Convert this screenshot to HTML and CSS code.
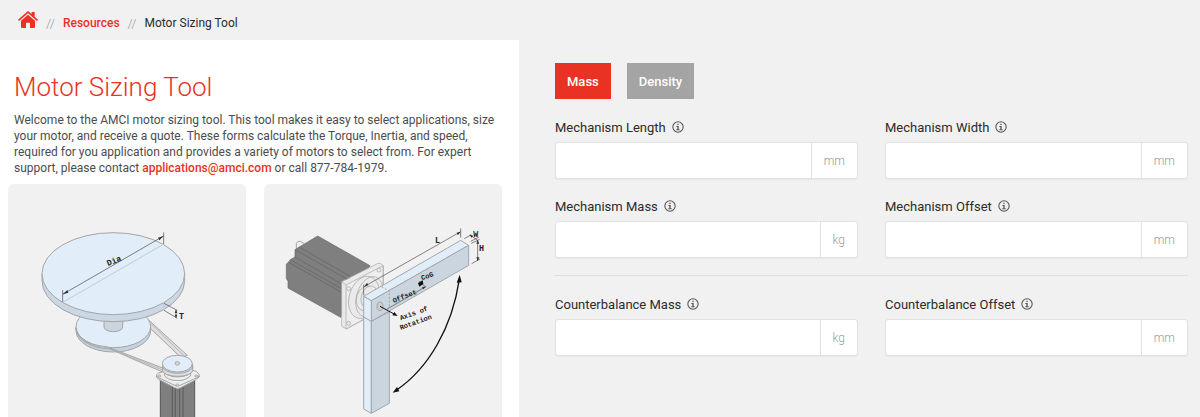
FILE: index.html
```html
<!DOCTYPE html>
<html lang="en">
<head>
<meta charset="utf-8">
<meta name="viewport" content="width=device-width, initial-scale=1">
<title>Motor Sizing Tool</title>
<link rel="stylesheet" href="styles.css">
</head>
<body>
<nav class="breadcrumb" aria-label="Breadcrumb">
  <a class="home" href="#" aria-label="Home">
    <svg viewBox="0 0 60 51" aria-hidden="true"><path d="M30 11 51 29V48Q51 51 48 51H36V35H24V51H12Q9 51 9 48V29Z"/><path d="M30 0 41 9V3H50V17L60 26 57 30 30 7 3 30 0 26Z"/></svg>
  </a>
  <span class="sep">//</span>
  <a class="crumb" href="#">Resources</a>
  <span class="sep">//</span>
  <span>Motor Sizing Tool</span>
</nav>
<main class="layout">
  <section class="intro">
    <h1>Motor Sizing Tool</h1>
    <p>Welcome to the AMCI motor sizing tool. This tool makes it easy to select applications, size your motor, and receive a quote. These forms calculate the Torque, Inertia, and speed, required for you application and provides a variety of motors to select from. For expert support, please contact <a href="#">applications@amci.com</a> or call 877-784-1979.</p>
    <div class="cards">
      <a class="card" href="#" aria-label="Rotary table">
        <svg viewBox="24 12 714 699" class="diagram">
          <g stroke="#a3a5a8" stroke-width="3">
            <path d="M448 422 562 526 542 532 446 440Z" fill="#dedede"/>
            <path d="M453 431 553 528" fill="none" stroke-width="2"/>
            <path d="M228 440V452A112 64 0 0 0 452 452V440Z" fill="#c5d3df"/>
            <ellipse cx="340" cy="440" rx="112" ry="63" fill="#e1edf8"/>
            <path d="M228 444C229 480 276 505 330 507L488 576V564L320 500C270 496 233 478 228 444Z" fill="#dedede"/>
            <path d="M229 450C237 485 280 501 324 503L488 570" fill="none" stroke-width="2"/>
            <path d="M312 418V441A28 14 0 0 0 368 441V418Z" fill="#cbd5df"/>
            <path d="M126 281V302A214 123 0 0 0 554 302V281Z" fill="#cbd7e2"/>
            <ellipse cx="340" cy="281" rx="214" ry="123" fill="#e1edf8"/>
          </g>
          <path d="M190 366 490 193M492 370V391" stroke="#bfcada" stroke-width="3"/>
          <g fill="none" stroke="#454545" stroke-width="2">
            <path d="M188 330V366M491 157V192M188 343 491 168M492 370 532 391M492 391 532 415M528 390V413"/>
          </g>
          <path d="M188 343 202 330 205 338ZM491 168 478 181 474 173ZM528 389 524 399H532ZM528 414 524 404H532Z" fill="#333"/>
          <text class="dim large" x="324" y="258" transform="rotate(-22 324 258)">Dia</text>
          <text class="dim large" x="537" y="418">T</text>
          <path d="M480 598H585V711H480Z" fill="#7f7f7f"/>
          <path d="M481 600V711M517 618V711M526 620V711M539 620V711M549 616V711M584 600V711" stroke="#5c5c5c" stroke-width="3"/>
          <g stroke="#a3a5a8" stroke-width="3" fill="#eee">
            <path d="M470 592Q466 583 476 579L490 575 528 562Q534 560 540 562L588 574Q600 580 598 591L586 600 540 624Q532 628 524 623L476 598Z"/>
            <path d="M468 588Q472 591 478 594L526 617Q532 620 538 617L589 594 598 588" fill="none"/>
            <ellipse cx="478" cy="588" rx="5" ry="3"/><ellipse cx="589" cy="588" rx="5" ry="3"/><ellipse cx="532" cy="615" rx="5" ry="3"/>
            <path d="M493 572V585A40 20 0 0 0 572 585V572Z"/>
            <path d="M488 552V566A45 25 0 0 0 578 566V552Z" fill="#c9d5df"/>
            <path d="M488 558V571A45 18 0 0 0 578 571V558A45 22 0 0 1 488 558Z" fill="#dedede"/>
            <ellipse cx="532" cy="551" rx="45" ry="25" fill="#e1edf8"/>
            <ellipse cx="532" cy="550" rx="7" ry="5" fill="#ddd"/>
          </g>
        </svg>
      </a>
      <a class="card" href="#" aria-label="Rotating arm">
        <svg viewBox="12 12 714 699" class="diagram">
          <g stroke="#a3a5a8" stroke-width="3" fill="#eee">
            <path d="M109 206V190Q112 182 122 184L134 192 130 206Z"/>
          </g>
          <path d="M173 168 330 257 242 412 84 324V303L79 296V252L87 245 91 239 105 231V209Z" fill="#7f7f7f" stroke="#666" stroke-width="2"/>
          <path d="M105 209 270 302M105 231 250 315M91 239 245 326M86 247 243 336M118 201 270 289" fill="none" stroke="#606060" stroke-width="2"/>
          <g stroke="#a3a5a8" stroke-width="2" fill="#eaeaea">
            <path d="M245 305 354 250Q360 247 370 257V386L260 447 245 439Z"/>
            <path d="M258 315 369 257V386L258 447Z" fill="#eee"/>
            <path d="M245 305 258 315M258 299 270 294"/>
            <ellipse cx="312" cy="352" rx="44" ry="65" transform="rotate(18 312 352)"/>
            <ellipse cx="328" cy="350" rx="38" ry="62" transform="rotate(18 328 350)" fill="none"/>
            <ellipse cx="318" cy="355" rx="28" ry="38" transform="rotate(18 318 355)"/>
            <ellipse cx="328" cy="351" rx="24" ry="34" transform="rotate(18 328 351)"/>
            <circle cx="266" cy="326" r="6"/><circle cx="266" cy="430" r="6"/><circle cx="357" cy="270" r="6"/>
          </g>
          <g stroke="#a3a7ad" stroke-width="3" stroke-linejoin="round">
            <path d="M311 411 334 422V700L311 687Z" fill="#e1edf8"/>
            <path d="M334 422 388 395V670L334 700Z" fill="#cad5df"/>
            <path d="M311 349 602 181 626 196 334 362Z" fill="#e1edf8"/>
            <path d="M334 362 626 196V256L334 424Z" fill="#cad5df"/>
            <path d="M311 349 334 362V424L311 411Z" fill="#e1edf8"/>
            <path d="M334 424 388 394" fill="none"/>
            <path d="M365 320 388 333V380" fill="none" stroke-dasharray="6 5"/>
            <ellipse cx="360" cy="379" rx="9" ry="13" fill="#ccc"/>
          </g>
          <g fill="none" stroke="#484848" stroke-width="2">
            <path d="M311 346V314M312 320 602 155M602 145V173M613 176 634 164M632 184 657 171M630 165 652 180M634 190 659 178M635 251 660 237M653 180V243M380 388 497 320M478 304 498 322"/>
          </g>
          <path d="M312 320 321 308 325 315ZM602 155 594 166 590 158ZM653 180 649 191H658ZM653 243 649 232H658ZM629 164 640 167 634 173ZM497 320 486 321 490 328Z" fill="#333"/>
          <path d="M360 379 406 404" stroke="#111" stroke-width="3"/>
          <path d="M413 408 397 406 403 396ZM474 309 488 301 490 312 478 320Z" fill="#111"/>
          <path d="M410 630C505 565 576 444 598 298" fill="none" stroke="#111" stroke-width="4"/>
          <path d="M599 284 590 308 605 307ZM398 638 411 621 418 634Z" fill="#111"/>
          <text class="dim large" x="525" y="189">L</text>
          <text class="dim large" x="640" y="170">W</text>
          <text class="dim large" x="657" y="214">H</text>
          <text class="dim" x="486" y="301" transform="rotate(-20 486 301)">CoG</text>
          <text class="dim" x="401" y="369" transform="rotate(-22 401 369)">Offset</text>
          <text class="dim" x="422" y="421" transform="rotate(-20 422 421)">Axis of</text>
          <text class="dim" x="422" y="450" transform="rotate(-20 422 450)">Rotation</text>
        </svg>
      </a>
    </div>
  </section>
  <form class="sizing">
    <svg class="defs" aria-hidden="true"><symbol id="info" viewBox="0 0 36 36"><circle cx="18" cy="18" r="15.5" fill="none" stroke="currentColor" stroke-width="3.2"/><path d="M16 8H20V12H16ZM13 15H20V25H23V28H13V25H16V18H13Z" fill="currentColor"/></symbol></svg>
    <div class="modes">
      <button type="button" class="mode active">Mass</button>
      <button type="button" class="mode">Density</button>
    </div>
    <div class="fields">
      <div class="field">
        <div class="caption"><label for="m-length">Mechanism Length</label><svg class="info"><use href="#info"/></svg></div>
        <div class="group"><input id="m-length" type="text"><span class="unit">mm</span></div>
      </div>
      <div class="field">
        <div class="caption"><label for="m-width">Mechanism Width</label><svg class="info"><use href="#info"/></svg></div>
        <div class="group"><input id="m-width" type="text"><span class="unit">mm</span></div>
      </div>
      <div class="field">
        <div class="caption"><label for="m-mass">Mechanism Mass</label><svg class="info"><use href="#info"/></svg></div>
        <div class="group"><input id="m-mass" type="text"><span class="unit">kg</span></div>
      </div>
      <div class="field">
        <div class="caption"><label for="m-offset">Mechanism Offset</label><svg class="info"><use href="#info"/></svg></div>
        <div class="group"><input id="m-offset" type="text"><span class="unit">mm</span></div>
      </div>
      <hr class="rule">
      <div class="field">
        <div class="caption"><label for="c-mass">Counterbalance Mass</label><svg class="info"><use href="#info"/></svg></div>
        <div class="group"><input id="c-mass" type="text"><span class="unit">kg</span></div>
      </div>
      <div class="field">
        <div class="caption"><label for="c-offset">Counterbalance Offset</label><svg class="info"><use href="#info"/></svg></div>
        <div class="group"><input id="c-offset" type="text"><span class="unit">mm</span></div>
      </div>
    </div>
  </form>
</main>
</body>
</html>
```
FILE: styles.css
```css
* { box-sizing: border-box; }
body {
  margin: 0;
  background: #f1f1f1;
  color: #2b2b2b;
  font-family: Roboto, "Liberation Sans", sans-serif;
  font-size: 12px;
}
a { color: #e93223; text-decoration: none; }
.breadcrumb {
  display: flex;
  align-items: center;
  gap: 8px;
  padding: 6px 18px 0;
  height: 40px;
}
.home { display: flex; padding-bottom: 8px; }
.home svg { width: 20px; height: 17px; fill: #e93223; }
.crumb { font-weight: 500; }
.sep { color: #999; font-size: 13px; font-weight: 300; }
.layout {
  display: grid;
  grid-template-columns: 519fr 681fr;
}
.intro { background: #fff; padding: 29px 17px 0 8px; }
h1 {
  margin: 0 6px 7px;
  color: #e93223;
  font-size: 26px;
  font-weight: 300;
  line-height: 36px;
}
.intro p {
  margin: 0 0 8px 6px;
  color: #4c4c4c;
  line-height: 16px;
}
.intro p a { font-weight: 500; }
.cards {
  display: grid;
  grid-template-columns: 1fr 1fr;
  gap: 18px;
}
.card {
  background: #f1f1f1;
  border-radius: 6px 6px 0 0;
  overflow: hidden;
}
.diagram { display: block; width: 100%; }
.dim {
  font-family: "Liberation Mono", monospace;
  font-size: 21px;
  font-weight: bold;
  fill: #222;
}
.large { font-size: 25px; }
.sizing { padding: 23px 12px 0 36px; }
.defs { display: none; }
.modes { display: flex; gap: 16px; margin-bottom: 18px; }
.mode {
  padding: 0 12px;
  height: 36px;
  border: 0;
  background: #a4a4a4;
  color: #fff;
  font-family: inherit;
  font-size: 13px;
  font-weight: 500;
}
.active { background: #e93223; }
.fields {
  display: grid;
  grid-template-columns: 1fr 1fr;
  gap: 18px 27px;
}
.caption {
  display: flex;
  align-items: center;
  gap: 6px;
  margin-bottom: 3px;
  font-size: 13px;
  line-height: 22px;
}
.info { width: 12px; height: 12px; margin-bottom: 2px; color: #555; }
.group {
  display: flex;
  height: 37px;
  margin-bottom: -1px;
  background: #fff;
  border: 1px solid #e2e2e2;
  border-radius: 3px;
  box-shadow: 0 1px 1px #e8e8e8;
}
.group input {
  flex: 1;
  min-width: 0;
  padding: 0 12px;
  border: 0;
  background: transparent;
  font: inherit;
}
.unit {
  display: flex;
  align-items: center;
  padding: 0 12px;
  border-left: 1px solid #e2e2e2;
  color: #999;
  font-size: 12px;
  font-weight: 300;
}
.rule {
  grid-column: 1 / -1;
  width: 100%;
  margin: 0;
  border: 0;
  border-top: 1px solid #dedede;
}
```
